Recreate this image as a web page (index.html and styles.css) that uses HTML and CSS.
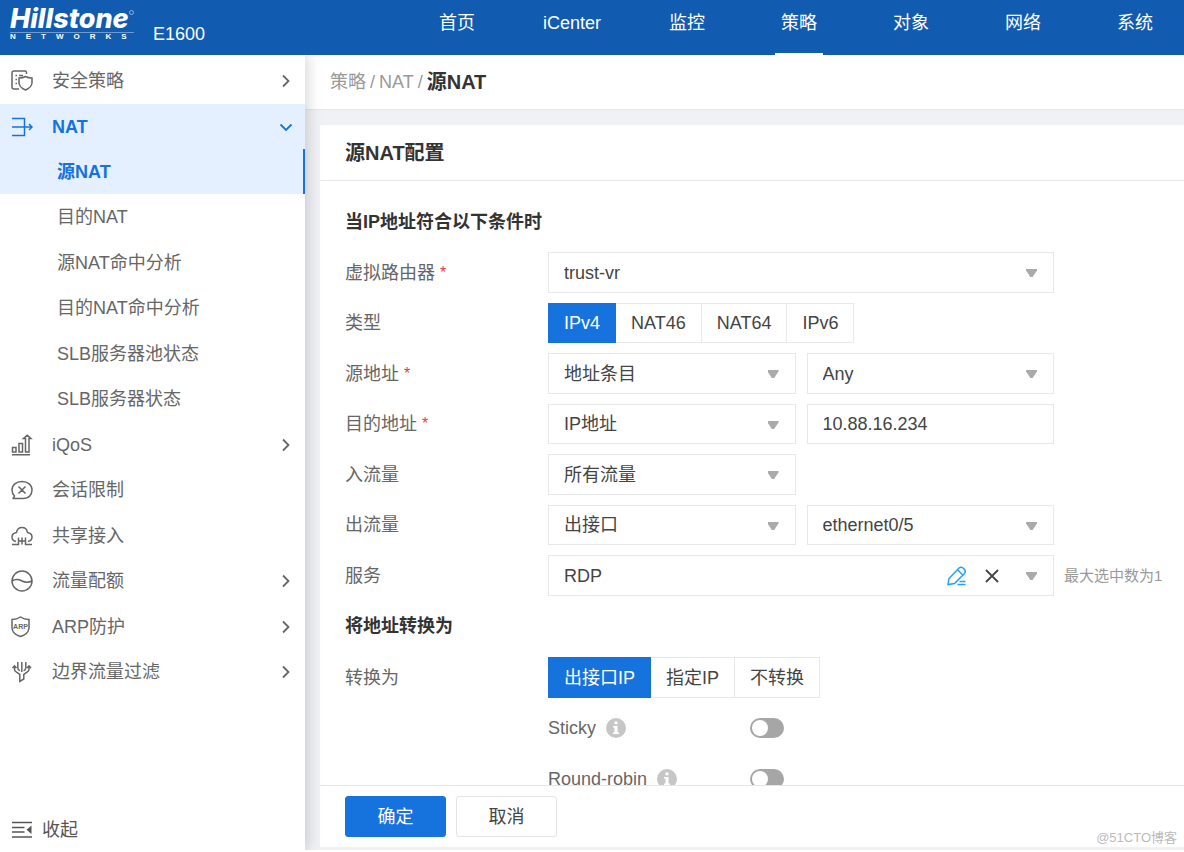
FILE: index.html
```html
<!DOCTYPE html>
<html lang="zh-CN">
<head>
<meta charset="utf-8">
<meta name="viewport" content="width=device-width, initial-scale=1">
<title>源NAT配置</title>
<link rel="stylesheet" href="styles.css">
</head>
<body>
<header class="topbar">
  <div class="brand">
    <div class="logo">
      <span class="logo-name">Hillstone</span>
      <span class="logo-sub">NETWORKS</span>
    </div>
    <span class="model">E1600</span>
  </div>
  <nav class="topnav">
    <a class="topnav-item" href="#">首页</a>
    <a class="topnav-item" href="#">iCenter</a>
    <a class="topnav-item" href="#">监控</a>
    <a class="topnav-item active" href="#">策略</a>
    <a class="topnav-item" href="#">对象</a>
    <a class="topnav-item" href="#">网络</a>
    <a class="topnav-item" href="#">系统</a>
  </nav>
</header>
<div class="shell">
  <aside class="sidebar">
    <nav>
      <a class="menu-item first" href="#">
        <svg class="menu-icon" viewBox="0 0 22 22"><path d="M8 19H3Q1 19 1 17V3Q1 1 3 1H14Q15.500 1 15.500 2.500V4M4.500 5.500H6M8 5.500H12M4.500 9.500H6M4.500 13.500H6M14.500 6.500Q17 8 21 8V13Q20.500 17.500 14.500 20Q8.500 17.500 8 13V8Q12 8 14.500 6.500Z"/></svg>
        <span>安全策略</span>
        <svg class="chevron" viewBox="0 0 14 14"><path d="M4 1.500L9.500 7L4 12.500"/></svg>
      </a>
      <a class="menu-item open" href="#">
        <svg class="menu-icon" viewBox="0 0 22 22"><path d="M1 2.500H13.500V19.500H1M1 11H20.500M18 8L21 11L18 14"/></svg>
        <span>NAT</span>
        <svg class="chevron" viewBox="0 0 14 14"><path d="M1.500 4.500L7 10L12.500 4.500"/></svg>
      </a>
      <div class="submenu">
        <a class="submenu-item active" href="#">源NAT</a>
        <a class="submenu-item" href="#">目的NAT</a>
        <a class="submenu-item" href="#">源NAT命中分析</a>
        <a class="submenu-item" href="#">目的NAT命中分析</a>
        <a class="submenu-item" href="#">SLB服务器池状态</a>
        <a class="submenu-item" href="#">SLB服务器状态</a>
      </div>
      <a class="menu-item short" href="#">
        <svg class="menu-icon" viewBox="0 0 22 22"><path d="M1 20.800H19M1.500 18V13.500H5V18ZM8 18V9.500H11.500V18ZM14.500 18V4.500H12.500L16.200 1.300L19.900 4.500H18V18Z"/></svg>
        <span>iQoS</span>
        <svg class="chevron" viewBox="0 0 14 14"><path d="M4 1.500L9.500 7L4 12.500"/></svg>
      </a>
      <a class="menu-item" href="#">
        <svg class="menu-icon" viewBox="0 0 22 22"><path d="M1.500 19.500H12C18 19.500 21 15.500 21 11C21 6 17 2.500 11 2.500C5 2.500 1 6 1 11C1 13.500 2 15.500 3.500 17Q3 19 1.500 19.500M7.500 7.500L14.500 14.500M14.500 7.500L7.500 14.500"/></svg>
        <span>会话限制</span>
      </a>
      <a class="menu-item short" href="#">
        <svg class="menu-icon" viewBox="0 0 22 22"><path d="M5 16.500C2.500 16 1 14 1 12C1 9.500 3 8 5.500 7.500C6 4.500 8 2.500 11 2.500C14 2.500 16 4.500 16.500 7.500C19 8 21 9.500 21 12C21 14 19.500 16 17 16.500M1 19.500H7.500V12.500M11 12.500V19.500M14.500 12.500V19.500H21M7.500 16H14.500"/></svg>
        <span>共享接入</span>
      </a>
      <a class="menu-item" href="#">
        <svg class="menu-icon" viewBox="0 0 22 22"><circle cx="11" cy="11" r="10"/><path d="M1 11C5 8.500 8 9.500 11 11C14 12.500 17 13 21 11"/></svg>
        <span>流量配额</span>
        <svg class="chevron" viewBox="0 0 14 14"><path d="M4 1.500L9.500 7L4 12.500"/></svg>
      </a>
      <a class="menu-item short" href="#">
        <svg class="menu-icon" viewBox="0 0 22 22"><path d="M9.500 1Q13 3.500 18 3.500V12Q17.500 18 9.500 20.500Q1.500 18 1 12V3.500Q6 3.500 9.500 1Z"/><text class="badge-text" x="9.500" y="13" text-anchor="middle">ARP</text></svg>
        <span>ARP防护</span>
        <svg class="chevron" viewBox="0 0 14 14"><path d="M4 1.500L9.500 7L4 12.500"/></svg>
      </a>
      <a class="menu-item" href="#">
        <svg class="menu-icon" viewBox="0 0 22 22"><path d="M3.500 5V8.500Q3.500 10 5.500 11.200L8.800 13.500V20.500L12.800 18V13.500L16 11.200Q18 10 18 8.500V5M1.500 7L3.500 4.800L5.500 7M16 7L18 4.800L20 7M6.800 1V7Q6.800 9 9 9.800M10.800 1V11M14.800 1V7Q14.800 9 12.600 9.800"/></svg>
        <span>边界流量过滤</span>
        <svg class="chevron" viewBox="0 0 14 14"><path d="M4 1.500L9.500 7L4 12.500"/></svg>
      </a>
    </nav>
    <button class="collapse" type="button">
      <svg class="menu-icon" viewBox="0 0 22 22"><path d="M1 3.500H21M1 8.500H13.500M1 13H13.500M1 18H21"/><path class="solid" d="M20.500 6.500V15L15.500 10.800Z"/></svg>
      <span>收起</span>
    </button>
  </aside>
  <main class="main">
    <div class="crumbs"><a href="#">策略</a><span>/</span><a href="#">NAT</a><span>/</span><strong>源NAT</strong></div>
    <form class="card">
      <h1 class="card-title">源NAT配置</h1>
      <div class="card-body">
        <h2 class="group-title">当IP地址符合以下条件时</h2>
        <div class="rows">
          <div class="row">
            <label class="label" for="vr">虚拟路由器 <em>*</em></label>
            <div class="fields"><div class="select"><select id="vr"><option>trust-vr</option></select></div></div>
          </div>
          <div class="row">
            <span class="label" id="type-label">类型</span>
            <div class="segments" role="radiogroup" aria-labelledby="type-label">
              <label class="segment"><input type="radio" name="type" checked><span>IPv4</span></label>
              <label class="segment"><input type="radio" name="type"><span>NAT46</span></label>
              <label class="segment"><input type="radio" name="type"><span>NAT64</span></label>
              <label class="segment"><input type="radio" name="type"><span>IPv6</span></label>
            </div>
          </div>
          <div class="row">
            <label class="label" for="src">源地址 <em>*</em></label>
            <div class="fields">
              <div class="select"><select id="src"><option>地址条目</option></select></div>
              <div class="select"><select aria-label="源地址条目"><option>Any</option></select></div>
            </div>
          </div>
          <div class="row">
            <label class="label" for="dst">目的地址 <em>*</em></label>
            <div class="fields">
              <div class="select"><select id="dst"><option>IP地址</option></select></div>
              <input class="text" type="text" value="10.88.16.234" aria-label="目的IP地址">
            </div>
          </div>
          <div class="row">
            <label class="label" for="in">入流量</label>
            <div class="fields">
              <div class="select"><select id="in"><option>所有流量</option></select></div>
              <div class="spacer"></div>
            </div>
          </div>
          <div class="row">
            <label class="label" for="out">出流量</label>
            <div class="fields">
              <div class="select"><select id="out"><option>出接口</option></select></div>
              <div class="select"><select aria-label="出接口"><option>ethernet0/5</option></select></div>
            </div>
          </div>
          <div class="row">
            <label class="label" for="svc">服务</label>
            <div class="fields">
              <div class="select">
                <select id="svc"><option>RDP</option></select>
                <div class="select-tools">
                  <button type="button" aria-label="编辑"><svg class="edit" viewBox="0 0 20 20"><path d="M1 18.500L2 12.500L12 2Q14 0.500 16 2L17.500 3.500Q19 5.500 17.500 7.500L7.500 17.500ZM10.500 3.800L15.800 9M12.500 15.500H18.500M10.500 18.500H18.500"/></svg></button>
                  <button type="button" aria-label="清除"><svg class="clear" viewBox="0 0 14 14"><path d="M1 1L13 13M13 1L1 13"/></svg></button>
                </div>
              </div>
            </div>
            <span class="hint">最大选中数为1</span>
          </div>
        </div>
        <h2 class="group-title second">将地址转换为</h2>
        <div class="rows">
          <div class="row">
            <span class="label" id="to-label">转换为</span>
            <div class="segments" role="radiogroup" aria-labelledby="to-label">
              <label class="segment"><input type="radio" name="to" checked><span>出接口IP</span></label>
              <label class="segment"><input type="radio" name="to"><span>指定IP</span></label>
              <label class="segment"><input type="radio" name="to"><span>不转换</span></label>
            </div>
          </div>
          <div class="row nested">
            <label class="label" for="sticky">Sticky <svg class="info" viewBox="0 0 20 20"><circle cx="10" cy="10" r="10"/><path d="M8.500 3.500H11.500V6.200H8.500ZM7 8H11.500V14.500H13V16H7V14.500H8.500V9.500H7Z"/></svg></label>
            <input class="switch" type="checkbox" role="switch" id="sticky">
          </div>
          <div class="row nested">
            <label class="label" for="robin">Round-robin <svg class="info" viewBox="0 0 20 20"><circle cx="10" cy="10" r="10"/><path d="M8.500 3.500H11.500V6.200H8.500ZM7 8H11.500V14.500H13V16H7V14.500H8.500V9.500H7Z"/></svg></label>
            <input class="switch" type="checkbox" role="switch" id="robin">
          </div>
        </div>
      </div>
      <div class="actions">
        <button class="btn primary" type="submit">确定</button>
        <button class="btn" type="button">取消</button>
      </div>
    </form>
  </main>
</div>
<div class="watermark">@51CTO博客</div>
</body>
</html>
```
FILE: styles.css
```css
* { box-sizing: border-box; }

body {
  margin: 0;
  height: 100vh;
  padding-bottom: 2px;
  display: flex;
  flex-direction: column;
  overflow: hidden;
  background: #fff;
  color: #444;
  font: 18px/24px "Liberation Sans", "Noto Sans CJK SC", sans-serif;
}

a { color: inherit; text-decoration: none; }
button, input, select { font: inherit; color: inherit; margin: 0; }
svg { fill: none; stroke: currentColor; flex: none; }

/* Top bar */
.topbar {
  flex: none;
  height: 55px;
  display: flex;
  justify-content: space-between;
  background: #115bb0;
  color: #fff;
}
.brand { display: flex; align-items: flex-start; gap: 19px; padding-left: 10px; }
.logo { position: relative; display: flex; flex-direction: column; width: 124px; padding-top: 5px; }
.logo-name {
  font: italic 800 27px/27px Inter, sans-serif;
  white-space: nowrap;
  border-bottom: 1px solid #6f9bd0;
}
.logo::after {
  content: "";
  position: absolute;
  top: 10px;
  right: 0;
  width: 3px;
  height: 3px;
  border: 1px solid #8fb4e0;
  border-radius: 50%;
}
.logo-sub { font: bold 8px/8px "Liberation Sans", sans-serif; letter-spacing: 10px; white-space: nowrap; }
.model { padding-top: 22px; }
.topnav { display: flex; gap: 48px; padding-right: 17px; }
.topnav-item {
  min-width: 64px;
  padding: 11px 6px 0;
  display: flex;
  flex-direction: column;
  align-items: center;
  justify-content: space-between;
}
.topnav-item::after { content: ""; width: 48px; height: 2px; }
.topnav-item.active::after { background: #fff; }

.shell { flex: 1; min-height: 0; display: flex; }

/* Sidebar */
.sidebar {
  flex: none;
  width: 305px;
  display: flex;
  flex-direction: column;
  justify-content: space-between;
  background: #fff;
  color: #666;
  z-index: 1;
  box-shadow: 2px 0 14px rgba(0, 0, 0, 0.18);
  clip-path: inset(0 -24px 0 0);
}
.menu-item {
  height: 46px;
  display: flex;
  align-items: center;
  padding: 0 12px 0 11px;
}
.menu-item.first { height: 49px; padding-top: 3px; }
.menu-item.open { height: 45px; }
.menu-item.short { height: 45px; }
.menu-icon { width: 22px; height: 22px; margin-right: 19px; stroke-width: 1.5; }
.menu-icon .solid { fill: currentColor; stroke: none; }
.badge-text { font: bold 7px "Liberation Sans", sans-serif; fill: currentColor; stroke: none; }
.chevron { width: 14px; height: 14px; margin-left: auto; stroke-width: 1.8; }
.menu-item.open, .submenu-item.active { background: #e4f0ff; color: #1672dd; font-weight: bold; }
.submenu-item {
  height: 46px;
  display: flex;
  align-items: center;
  padding-left: 57px;
}
.submenu-item:nth-child(odd) { height: 45px; }
.submenu-item.active { border-right: 2px solid #1672dd; }
.collapse {
  display: flex;
  align-items: center;
  height: 40px;
  padding: 0 11px;
  border: 0;
  background: none;
  color: #555;
}
.collapse .menu-icon { margin-right: 9px; }

/* Main */
.main {
  flex: 1;
  min-width: 0;
  display: flex;
  flex-direction: column;
  background: #f0f1f5;
}
.crumbs {
  flex: none;
  height: 55px;
  display: flex;
  align-items: center;
  gap: 4px;
  padding-left: 25px;
  background: #fff;
  border-bottom: 1px solid #e6e7ea;
  color: #999;
}
.crumbs strong { font-size: 20px; color: #333; }
.card {
  flex: 1;
  min-height: 0;
  display: flex;
  flex-direction: column;
  margin: 15px 0 3px 15px;
  background: #fff;
}
.card-title {
  flex: none;
  margin: 0;
  height: 56px;
  padding-left: 25px;
  border-bottom: 1px solid #e8e8e8;
  font-size: 20px;
  line-height: 56px;
  color: #333;
}
.card-body { flex: 1; min-height: 0; overflow: hidden; padding: 29px 20px 0 25px; }
.group-title { margin: 0 0 18px; font-size: 18px; line-height: 24px; color: #333; }
.group-title.second { margin: 18px 0 19px; }
.rows { display: flex; flex-direction: column; gap: 10px; }
.row {
  height: 41px;
  display: grid;
  grid-template-columns: 203px minmax(0, 506px) 100px;
  align-items: stretch;
}
.row:nth-child(even) { height: 40px; }
.label { display: flex; align-items: center; gap: 5px; color: #666; }
.label em { font-style: normal; font-size: 16px; color: #e83c3c; }
.fields { display: grid; grid-auto-flow: column; grid-auto-columns: minmax(0, 1fr); gap: 11px; }
.select { position: relative; }
.select select, .text {
  width: 100%;
  height: 100%;
  padding: 0 15px;
  border: 1px solid #e8e8e8;
  border-radius: 0;
  background: #fff;
  appearance: none;
}
.select::after {
  content: "";
  position: absolute;
  right: 17px;
  top: 17px;
  width: 11px;
  height: 8px;
  background: #aaa;
  clip-path: polygon(0 0, 100% 0, 100% 20%, 60% 100%, 40% 100%, 0 20%);
}
.select-tools {
  position: absolute;
  top: 0;
  right: 55px;
  height: 100%;
  display: flex;
  align-items: center;
  gap: 18px;
}
.select-tools button { display: flex; padding: 0; border: 0; background: none; }
.edit { width: 20px; height: 20px; color: #22a0f5; stroke-width: 1.5; }
.clear { width: 14px; height: 14px; color: #444; stroke-width: 1.8; }
.hint { align-self: center; padding-left: 10px; font-size: 15px; color: #999; white-space: nowrap; }

.segments { display: flex; }
.segment { position: relative; display: flex; }
.segment + .segment { margin-left: -1px; }
.segment input { position: absolute; opacity: 0; }
.segment span {
  display: flex;
  align-items: center;
  padding: 0 15px;
  border: 1px solid #e8e8e8;
  white-space: nowrap;
}
.segment input:checked + span { z-index: 1; background: #1672dd; border-color: #1672dd; color: #fff; }

.row.nested { grid-template-columns: 202px 34px; padding-left: 203px; align-items: center; }
.info { width: 20px; height: 20px; margin-left: 5px; stroke: none; }
.info circle { fill: #c6c6c6; }
.info path { fill: #fff; }
.switch {
  appearance: none;
  width: 34px;
  height: 20px;
  padding: 2px;
  border-radius: 10px;
  background: #a6a6a6;
}
.switch::before {
  content: "";
  display: block;
  width: 16px;
  height: 16px;
  border-radius: 50%;
  background: #fff;
}
.switch:checked { background: #1672dd; }
.switch:checked::before { margin-left: auto; }

.actions {
  flex: none;
  display: flex;
  gap: 10px;
  padding: 10px 25px;
  border-top: 1px solid #e6e6e6;
}
.btn {
  width: 101px;
  height: 41px;
  padding: 0;
  border: 1px solid #e4e4e4;
  border-radius: 3px;
  background: #fff;
}
.btn.primary { background: #1672dd; border-color: #1672dd; color: #fff; }

.watermark {
  position: absolute;
  right: 7px;
  bottom: 4px;
  z-index: 2;
  font-size: 13px;
  line-height: 20px;
  color: #bbb;
}
```
